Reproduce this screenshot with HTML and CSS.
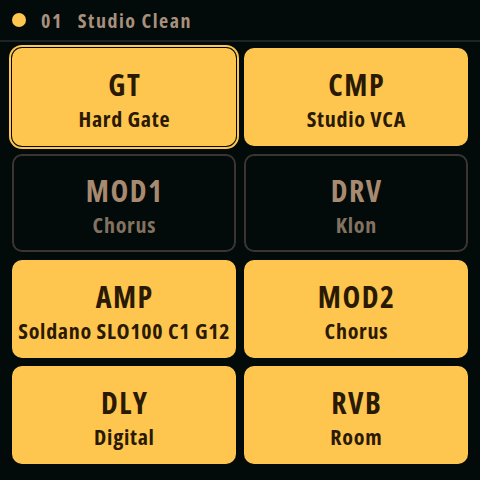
FILE: index.html
```html
<!DOCTYPE html>
<html lang="en">
<head>
    <meta charset="UTF-8">
    <meta name="viewport" content="width=device-width, initial-scale=1.0">
    <title>Preset</title>
    <link rel="stylesheet" href="styles.css">
</head>
<body>
    <div class="screen">
        <div class="header">
            <span class="dot"></span>
            <span class="preset-num">01</span>
            <span class="preset-name">Studio Clean</span>
        </div>

        <div class="grid">
            <div class="block on selected">
                <div class="block-title">GT</div>
                <div class="block-model">Hard Gate</div>
            </div>
            <div class="block on">
                <div class="block-title">CMP</div>
                <div class="block-model">Studio VCA</div>
            </div>
            <div class="block off">
                <div class="block-title">MOD1</div>
                <div class="block-model">Chorus</div>
            </div>
            <div class="block off">
                <div class="block-title">DRV</div>
                <div class="block-model">Klon</div>
            </div>
            <div class="block on">
                <div class="block-title">AMP</div>
                <div class="block-model">Soldano SLO100 C1 G12</div>
            </div>
            <div class="block on">
                <div class="block-title">MOD2</div>
                <div class="block-model">Chorus</div>
            </div>
            <div class="block on">
                <div class="block-title">DLY</div>
                <div class="block-model">Digital</div>
            </div>
            <div class="block on">
                <div class="block-title">RVB</div>
                <div class="block-model">Room</div>
            </div>
        </div>
    </div>
</body>
</html>
```

FILE: styles.css
```css
body {
    margin: 0;
    padding: 0;
    background-color: #020a0a;
    font-family: 'Open Sans', 'DejaVu Sans', sans-serif;
    font-stretch: 75%;
    font-weight: bold;
}

.screen {
    width: 480px;
    height: 480px;
    overflow: hidden;
}

.header {
    display: flex;
    align-items: center;
    padding-left: 12px;
    border-bottom: 2px solid #1e2424;
    box-sizing: border-box;
    height: 42px;
    color: #a8907c;
    font-size: 20px;
    letter-spacing: 1.5px;
}

.dot {
    width: 14px;
    height: 14px;
    border-radius: 50%;
    background-color: #ffc64f;
    margin-right: 15px;
}

.preset-num {
    margin-right: 15px;
}

.grid {
    display: grid;
    grid-template-columns: 1fr 1fr;
    grid-auto-rows: 98px;
    gap: 8px;
    padding: 6px 12px 0 12px;
}

.block {
    border-radius: 10px;
    display: flex;
    flex-direction: column;
    align-items: center;
    justify-content: center;
    box-sizing: border-box;
    white-space: nowrap;
    padding-top: 6px;
}

.block.on {
    background-color: #ffc64f;
    color: #2a1a04;
}

.block.off {
    border: 2px solid #3a3530;
    color: #a88a70;
}

.block.off .block-model {
    color: #837260;
}

.block.selected {
    box-shadow: 0 0 0 1px #020a0a, 0 0 0 3px #ffc64f;
}

.block-title {
    font-size: 30px;
    line-height: 34px;
    letter-spacing: 1.5px;
    padding-left: 1.5px;
}

.block-model {
    font-size: 22px;
    line-height: 28px;
    margin-top: 2px;
    letter-spacing: 0.7px;
    padding-left: 0.7px;
}
```
